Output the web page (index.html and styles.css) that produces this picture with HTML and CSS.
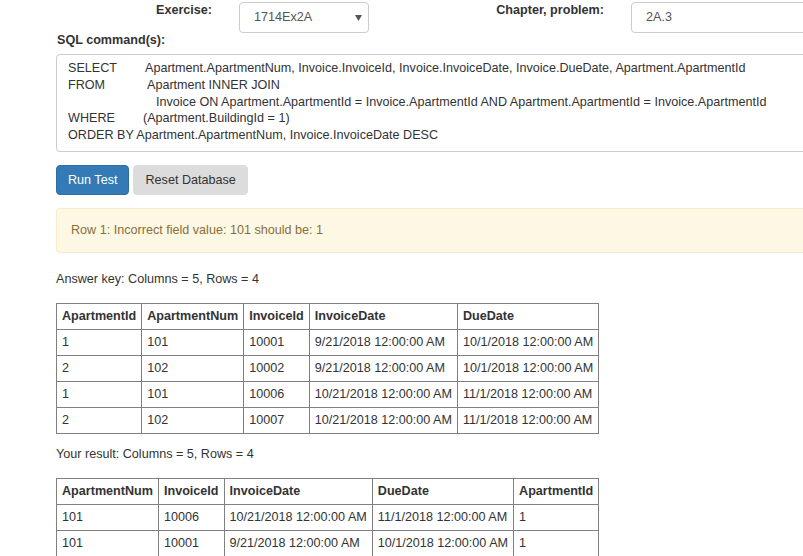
FILE: index.html
```html
<!DOCTYPE html>
<html>
<head>
<meta charset="utf-8">
<link rel="stylesheet" href="styles.css">
</head>
<body>
<div class="page">
  <div class="top-row">
    <label class="lbl lbl-ex">Exercise:</label>
    <div class="select">
      <span>1714Ex2A</span>
      <svg class="caret" width="7" height="6" viewBox="0 0 7 6"><path d="M0 0H7L3.5 6Z" fill="#555"/></svg>
    </div>
    <label class="lbl lbl-ch">Chapter, problem:</label>
    <div class="input">2A.3</div>
  </div>
  <div class="main">
    <div class="sql-label">SQL command(s):</div>
    <div class="sql">
      <div><span class="kw kw-select">SELECT</span>Apartment.ApartmentNum, Invoice.InvoiceId, Invoice.InvoiceDate, Invoice.DueDate, Apartment.ApartmentId</div>
      <div><span class="kw kw-from">FROM</span>Apartment INNER JOIN</div>
      <div><span class="kw kw-on"></span>Invoice ON Apartment.ApartmentId = Invoice.ApartmentId AND Apartment.ApartmentId = Invoice.ApartmentId</div>
      <div><span class="kw kw-where">WHERE</span>(Apartment.BuildingId = 1)</div>
      <div>ORDER BY Apartment.ApartmentNum, Invoice.InvoiceDate DESC</div>
    </div>
    <div class="buttons">
      <button class="btn btn-primary">Run Test</button>
      <button class="btn btn-default">Reset Database</button>
    </div>
    <div class="alert">Row 1: Incorrect field value: 101 should be: 1</div>
    <div class="caption caption-1">Answer key: Columns = 5, Rows = 4</div>
    <table class="grid">
      <tr><th>ApartmentId</th><th>ApartmentNum</th><th>InvoiceId</th><th>InvoiceDate</th><th>DueDate</th></tr>
      <tr><td>1</td><td>101</td><td>10001</td><td>9/21/2018 12:00:00 AM</td><td>10/1/2018 12:00:00 AM</td></tr>
      <tr><td>2</td><td>102</td><td>10002</td><td>9/21/2018 12:00:00 AM</td><td>10/1/2018 12:00:00 AM</td></tr>
      <tr><td>1</td><td>101</td><td>10006</td><td>10/21/2018 12:00:00 AM</td><td>11/1/2018 12:00:00 AM</td></tr>
      <tr><td>2</td><td>102</td><td>10007</td><td>10/21/2018 12:00:00 AM</td><td>11/1/2018 12:00:00 AM</td></tr>
    </table>
    <div class="caption caption-2">Your result: Columns = 5, Rows = 4</div>
    <table class="grid">
      <tr><th>ApartmentNum</th><th>InvoiceId</th><th>InvoiceDate</th><th>DueDate</th><th>ApartmentId</th></tr>
      <tr><td>101</td><td>10006</td><td>10/21/2018 12:00:00 AM</td><td>11/1/2018 12:00:00 AM</td><td>1</td></tr>
      <tr><td>101</td><td>10001</td><td>9/21/2018 12:00:00 AM</td><td>10/1/2018 12:00:00 AM</td><td>1</td></tr>
    </table>
  </div>
</div>
</body>
</html>
```
FILE: styles.css
```css
html, body {
  margin: 0;
  padding: 0;
  background: #fff;
  overflow: hidden;
}
body {
  font-family: "Liberation Sans", Arial, sans-serif;
  font-size: 12.6px;
  color: #333;
  line-height: 17px;
}
.page {
  width: 803px;
  height: 556px;
  overflow: hidden;
}
.top-row {
  display: flex;
  align-items: flex-start;
  padding-top: 2px;
  height: 31px;
  width: 1000px;
}
.lbl {
  font-weight: bold;
  text-align: right;
  line-height: 14px;
  padding-top: 1px;
  flex-shrink: 0;
}
.lbl-ex {
  width: 212px;
  margin-right: 27px;
}
.lbl-ch {
  width: 235px;
  margin-right: 27px;
}
.select, .input {
  box-sizing: border-box;
  height: 31px;
  border: 1px solid #ccc;
  border-radius: 4px;
  padding: 6px 14px;
  line-height: 17px;
  color: #555;
  flex-shrink: 0;
}
.select {
  width: 130px;
  display: flex;
  align-items: center;
  justify-content: space-between;
  padding-right: 6px;
}
.caret {
  margin-top: 1px;
}
.input {
  width: 220px;
}
.main {
  margin-left: 56px;
  width: 790px;
}
.sql-label {
  font-weight: bold;
  line-height: 14px;
  margin-top: 0;
  padding-left: 1px;
  margin-bottom: 7px;
}
.sql {
  border: 1px solid #ccc;
  border-radius: 4px;
  padding: 5px 11px 7px;
  line-height: 16.8px;
  white-space: nowrap;
  color: #333;
}
.kw {
  display: inline-block;
}
.kw-select { width: 77px; }
.kw-from { width: 79px; }
.kw-on { width: 88px; }
.kw-where { width: 75px; }
.buttons {
  display: flex;
  gap: 4px;
  margin-top: 13px;
}
.btn {
  font-family: inherit;
  font-size: 12.6px;
  line-height: 17px;
  padding: 6px 11px 5px;
  border: 1px solid transparent;
  border-radius: 4px;
  margin: 0;
}
.btn-primary {
  background: #337ab7;
  border-color: #2e6da4;
  color: #fff;
}
.btn-default {
  background: #dcdcdc;
  border-color: #dcdcdc;
  color: #333;
}
.alert {
  margin-top: 13px;
  background: #fcf8e3;
  border: 1px solid #faebcc;
  border-right: none;
  border-radius: 4px 0 0 4px;
  color: #8a6d3b;
  padding: 13px 14px 13px;
  line-height: 17px;
}
.caption {
  line-height: 17px;
}
.caption-1 {
  margin-top: 18px;
  margin-bottom: 15px;
}
.caption-2 {
  margin-top: 12px;
  margin-bottom: 15px;
}
.grid {
  border-collapse: collapse;
  border: 1px solid #808080;
}
.grid th, .grid td {
  border: 1px solid #808080;
  padding: 4px 5px 4px 5px;
  text-align: left;
  line-height: 17px;
  white-space: nowrap;
}
.grid th {
  font-weight: bold;
}
```
